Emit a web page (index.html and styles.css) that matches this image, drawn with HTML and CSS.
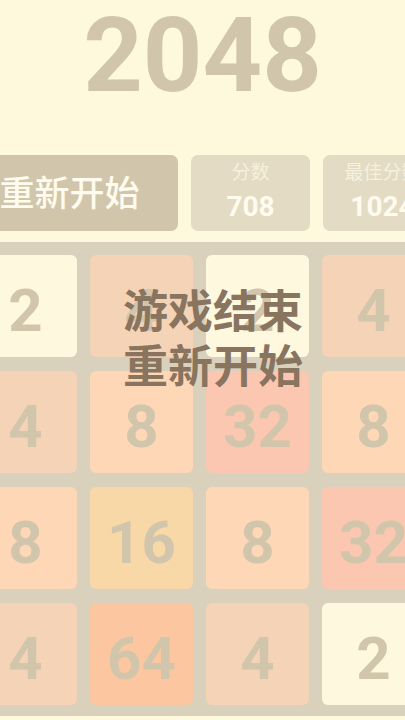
FILE: index.html
```html
<!DOCTYPE html>
<html lang="zh">
<head>
<meta charset="utf-8">
<title>2048</title>
<link rel="stylesheet" href="styles.css">
</head>
<body>
<h1 class="title">2048</h1>
<div class="game">
  <div class="controls">
    <div class="restart">重新开始</div>
    <div class="score-box">
      <div class="score-label">分数</div>
      <div class="score-value">708</div>
    </div>
    <div class="score-box">
      <div class="score-label">最佳分数</div>
      <div class="score-value">1024</div>
    </div>
  </div>
  <div class="board">
    <div class="tile t2">2</div>
    <div class="tile t4">4</div>
    <div class="tile t2">2</div>
    <div class="tile t4">4</div>
    <div class="tile t4">4</div>
    <div class="tile t8">8</div>
    <div class="tile t32">32</div>
    <div class="tile t8">8</div>
    <div class="tile t8">8</div>
    <div class="tile t16">16</div>
    <div class="tile t8">8</div>
    <div class="tile t32">32</div>
    <div class="tile t4">4</div>
    <div class="tile t64">64</div>
    <div class="tile t4">4</div>
    <div class="tile t2">2</div>
    <div class="overlay">
      <div class="overlay-line">游戏结束</div>
      <div class="overlay-line">重新开始</div>
    </div>
  </div>
</div>
</body>
</html>
```
FILE: styles.css
```css
html, body {
  margin: 0;
  padding: 0;
  overflow: hidden;
}
body {
  background: #fef8dd;
  width: 405px;
  height: 720px;
  font-family: Roboto, "Noto Sans CJK SC", sans-serif;
}
.title {
  margin: 3px 0 0 0;
  text-align: center;
  font-size: 104px;
  line-height: 105px;
  font-weight: 700;
  color: #d1c6ab;
}
.game {
  margin-top: 47px;
  margin-left: -39px;
  width: 477px;
}
.controls {
  display: flex;
  gap: 13px;
  height: 76px;
  width: 481px;
}
.restart {
  width: 217px;
  flex: none;
  background: #d1c6ab;
  border-radius: 7px;
  color: #fffbee;
  font-family: "Noto Sans CJK SC", sans-serif;
  font-size: 35px;
  font-weight: 500;
  display: flex;
  align-items: center;
  justify-content: center;
  padding-bottom: 6px;
  box-sizing: border-box;
}
.score-box {
  width: 119px;
  flex: none;
  background: #e3dbc3;
  border-radius: 7px;
  text-align: center;
  padding-top: 5px;
  box-sizing: border-box;
  white-space: nowrap;
  overflow: hidden;
}
.score-label {
  font-family: "Noto Sans CJK SC", sans-serif;
  font-size: 19px;
  line-height: 22px;
  color: #f6f0dd;
}
.score-value {
  margin-top: 9px;
  font-size: 28px;
  line-height: 32px;
  font-weight: 700;
  color: #fffbee;
}
.board {
  position: relative;
  margin-top: 11px;
  background: #d9d1bb;
  border-radius: 6px;
  padding: 13px 13px 11px 13px;
  display: grid;
  grid-template-columns: repeat(4, 103px);
  grid-auto-rows: 102px;
  column-gap: 13px;
  row-gap: 14px;
}
.tile {
  border-radius: 6px;
  display: flex;
  align-items: center;
  justify-content: center;
  font-size: 60px;
  font-weight: 700;
  color: #d1c6ab;
  padding-top: 8px;
  box-sizing: border-box;
}
.t2 { background: #fef8df; }
.t4 { background: #f5d3b7; }
.t8 { background: #fdd7b6; }
.t16 { background: #f9d8a8; }
.t32 { background: #fbc7b0; }
.t64 { background: #fcc7a0; }
.overlay {
  position: absolute;
  top: 39px;
  left: 27px;
  right: 0;
  text-align: center;
}
.overlay-line {
  font-family: "Noto Sans CJK SC", sans-serif;
  font-size: 45px;
  line-height: 55px;
  font-weight: 700;
  color: #88745f;
}
```
